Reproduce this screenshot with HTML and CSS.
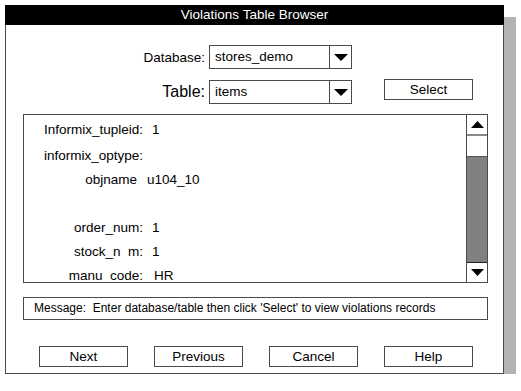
FILE: index.html
```html
<!DOCTYPE html>
<html lang="en">
  <head>
    <meta charset="UTF-8" />
    <title>Violations Table Browser</title>
    <link rel="stylesheet" href="styles.css">
  </head>
  <body>
    <div class="window">
      <div class="title-bar">Violations Table Browser</div>
      <div class="form">
        <div class="form-row">
          <label class="field-label">Database:</label>
          <div class="combo">
            <span class="combo-text">stores_demo</span>
            <span class="combo-btn">
              <svg width="14" height="7" viewBox="0 0 14 7"><polygon points="0,0 14,0 7,7" fill="#000"/></svg>
            </span>
          </div>
        </div>
        <div class="form-row row-table">
          <label class="field-label label-big">Table:</label>
          <div class="combo">
            <span class="combo-text">items</span>
            <span class="combo-btn">
              <svg width="14" height="7" viewBox="0 0 14 7"><polygon points="0,0 14,0 7,7" fill="#000"/></svg>
            </span>
          </div>
          <button class="btn btn-select">Select</button>
        </div>
      </div>

      <div class="list-box">
        <div class="records">
          <div class="rec"><span class="rec-label">Informix_tupleid:</span><span class="rec-value">1</span></div>
          <div class="rec rec-2"><span class="rec-label">informix_optype:</span><span class="rec-value"></span></div>
          <div class="rec"><span class="rec-label label-obj">objname</span><span class="rec-value value-obj">u104_10</span></div>
          <div class="rec"><span class="rec-label"></span><span class="rec-value"></span></div>
          <div class="rec"><span class="rec-label">order_num:</span><span class="rec-value">1</span></div>
          <div class="rec"><span class="rec-label">stock_n  m:</span><span class="rec-value">1</span></div>
          <div class="rec"><span class="rec-label">manu_code:</span><span class="rec-value value-hr">HR</span></div>
        </div>
        <div class="scrollbar">
          <div class="arrow-btn arrow-up">
            <svg width="13" height="7" viewBox="0 0 13 7"><polygon points="0,7 13,7 6.5,0" fill="#000"/></svg>
          </div>
          <div class="thumb-gap"></div>
          <div class="trough"></div>
          <div class="arrow-btn arrow-down">
            <svg width="13" height="7" viewBox="0 0 13 7"><polygon points="0,0 13,0 6.5,7" fill="#000"/></svg>
          </div>
        </div>
      </div>

      <div class="message">Message:&nbsp; Enter database/table then click 'Select' to view violations records</div>

      <div class="actions">
        <button class="btn">Next</button>
        <button class="btn">Previous</button>
        <button class="btn">Cancel</button>
        <button class="btn">Help</button>
      </div>
    </div>
  </body>
</html>
```

FILE: styles.css
```css
body {
    margin: 0;
    background-color: #ffffff;
    font-family: "Liberation Sans", Arial, sans-serif;
    font-size: 13.5px;
    color: #000;
}
.window {
    box-sizing: border-box;
    margin: 5px 0 0 5px;
    width: 499px;
    height: 369px;
    background-color: #fff;
    border: 1px solid #4a4a4a;
    border-top: none;
    box-shadow: 12px 12px 0 #b3b3b3;
}
.title-bar {
    margin: 0 -1px;
    height: 20px;
    line-height: 20px;
    background-color: #000;
    color: #fff;
    text-align: center;
    font-size: 13.5px;
}
.form {
    padding-top: 20px;
}
.form-row {
    display: flex;
    align-items: center;
    height: 24px;
}
.row-table {
    margin-top: 11px;
}
.field-label {
    width: 199px;
    text-align: right;
    margin-right: 4px;
}
.label-big {
    font-size: 16px;
}
.combo {
    box-sizing: border-box;
    display: flex;
    width: 143px;
    height: 24px;
    border: 1px solid #4a4a4a;
}
.combo-text {
    flex: 1;
    padding-left: 5px;
    line-height: 22px;
}
.combo-btn {
    width: 21px;
    border-left: 1px solid #4a4a4a;
    display: flex;
    align-items: center;
    justify-content: center;
}
.btn {
    box-sizing: border-box;
    width: 89px;
    height: 21px;
    padding: 0;
    background: #fff;
    border: 1px solid #4a4a4a;
    font-family: inherit;
    font-size: 13.5px;
    color: #000;
}
.btn-select {
    margin-left: 32px;
    margin-top: -5px;
}
.list-box {
    box-sizing: border-box;
    display: flex;
    margin: 10px 0 0 17px;
    width: 465px;
    height: 169px;
    border: 1px solid #4a4a4a;
    overflow: hidden;
}
.records {
    flex: 1;
    padding-top: 3px;
}
.rec {
    display: grid;
    grid-template-columns: 119px auto;
    column-gap: 9px;
    height: 24px;
    line-height: 24px;
}
.rec-2 {
    margin-top: 2px;
}
.rec-label {
    text-align: right;
    white-space: pre;
}
.label-obj {
    padding-right: 6px;
}
.value-obj {
    margin-left: -5px;
}
.value-hr {
    margin-left: 2px;
}
.scrollbar {
    width: 20px;
    border-left: 1px solid #4a4a4a;
    display: flex;
    flex-direction: column;
}
.arrow-btn {
    height: 19px;
    display: flex;
    align-items: center;
    justify-content: center;
}
.arrow-up {
    border-bottom: 2px solid #8a8a8a;
}
.arrow-down {
    border-top: 1px solid #222;
}
.thumb-gap {
    height: 20px;
    border-bottom: 1px solid #555;
}
.trough {
    flex: 1;
    background-color: #808080;
}
.message {
    box-sizing: border-box;
    margin: 14px 0 0 17px;
    width: 465px;
    height: 23px;
    line-height: 21px;
    padding-left: 10px;
    border: 1px solid #4a4a4a;
    font-size: 12px;
}
.actions {
    display: flex;
    gap: 26px;
    margin: 26px 0 0 33px;
}
```
